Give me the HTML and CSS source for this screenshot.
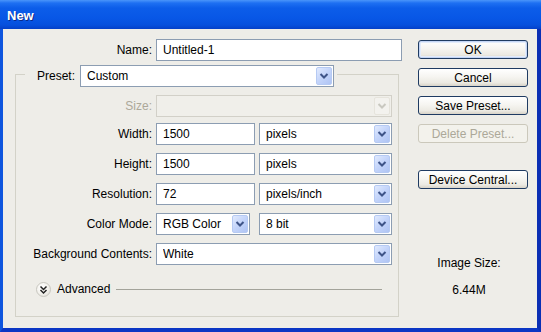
FILE: index.html
```html
<!DOCTYPE html>
<html>
<head>
<meta charset="utf-8">
<title>New</title>
<link rel="stylesheet" href="styles.css">
</head>
<body>
<div class="window">
  <div class="titlebar"><span class="title">New</span></div>
  <div class="frame">
    <div class="client">
      <div class="left">
        <div class="name-row">
          <span class="lbl name-lbl">Name:</span>
          <div class="field name-field">Untitled-1</div>
        </div>
        <div class="group">
          <div class="group-head">
            <span class="preset-lbl">Preset:</span>
            <div class="combo preset-combo"><span class="val">Custom</span><span class="arrow"><svg width="16" height="18" viewBox="0 0 16 18"><polyline points="4.5,7 8,10.5 11.5,7" fill="none" stroke="#3E5488" stroke-width="2"/></svg></span></div>
          </div>
          <div class="rows">
            <div class="row size-row">
              <span class="lbl disabled-text">Size:</span>
              <div class="combo combo-disabled full"><span class="val"></span><span class="arrow arrow-disabled"><svg width="16" height="18" viewBox="0 0 16 18"><polyline points="4.5,7 8,10.5 11.5,7" fill="none" stroke="#C9C8C0" stroke-width="2"/></svg></span></div>
            </div>
            <div class="row">
              <span class="lbl">Width:</span>
              <div class="ctrls">
                <div class="field num-field">1500</div>
                <div class="combo unit"><span class="val">pixels</span><span class="arrow"><svg width="16" height="18" viewBox="0 0 16 18"><polyline points="4.5,7 8,10.5 11.5,7" fill="none" stroke="#3E5488" stroke-width="2"/></svg></span></div>
              </div>
            </div>
            <div class="row">
              <span class="lbl">Height:</span>
              <div class="ctrls">
                <div class="field num-field">1500</div>
                <div class="combo unit"><span class="val">pixels</span><span class="arrow"><svg width="16" height="18" viewBox="0 0 16 18"><polyline points="4.5,7 8,10.5 11.5,7" fill="none" stroke="#3E5488" stroke-width="2"/></svg></span></div>
              </div>
            </div>
            <div class="row">
              <span class="lbl">Resolution:</span>
              <div class="ctrls">
                <div class="field num-field">72</div>
                <div class="combo unit"><span class="val">pixels/inch</span><span class="arrow"><svg width="16" height="18" viewBox="0 0 16 18"><polyline points="4.5,7 8,10.5 11.5,7" fill="none" stroke="#3E5488" stroke-width="2"/></svg></span></div>
              </div>
            </div>
            <div class="row">
              <span class="lbl">Color Mode:</span>
              <div class="ctrls">
                <div class="combo mode"><span class="val">RGB Color</span><span class="arrow"><svg width="16" height="18" viewBox="0 0 16 18"><polyline points="4.5,7 8,10.5 11.5,7" fill="none" stroke="#3E5488" stroke-width="2"/></svg></span></div>
                <div class="combo unit"><span class="val">8 bit</span><span class="arrow"><svg width="16" height="18" viewBox="0 0 16 18"><polyline points="4.5,7 8,10.5 11.5,7" fill="none" stroke="#3E5488" stroke-width="2"/></svg></span></div>
              </div>
            </div>
            <div class="row">
              <span class="lbl">Background Contents:</span>
              <div class="combo full"><span class="val">White</span><span class="arrow"><svg width="16" height="18" viewBox="0 0 16 18"><polyline points="4.5,7 8,10.5 11.5,7" fill="none" stroke="#3E5488" stroke-width="2"/></svg></span></div>
            </div>
          </div>
          <div class="advanced">
            <span class="adv-icon"><svg width="15" height="15" viewBox="0 0 15 15"><polyline points="4.5,4.5 7.5,7.5 10.5,4.5" fill="none" stroke="#222" stroke-width="1.5"/><polyline points="4.5,8 7.5,11 10.5,8" fill="none" stroke="#222" stroke-width="1.5"/></svg></span>
            <span class="adv-text">Advanced</span>
            <span class="adv-line"></span>
          </div>
        </div>
      </div>
      <div class="right">
        <div class="btn default">OK</div>
        <div class="btn">Cancel</div>
        <div class="btn">Save Preset...</div>
        <div class="btn disabled">Delete Preset...</div>
        <div class="btn device">Device Central...</div>
        <div class="info">
          <div class="info-line">Image Size:</div>
          <div class="info-line info-value">6.44M</div>
        </div>
      </div>
    </div>
  </div>
</div>
</body>
</html>
```

FILE: styles.css
```css
html, body {
  margin: 0;
  padding: 0;
}
body {
  width: 541px;
  height: 332px;
  overflow: hidden;
  font-family: "Liberation Sans", Arial, sans-serif;
  font-size: 12px;
  color: #000;
}
.window {
  width: 541px;
  height: 332px;
  display: flex;
  flex-direction: column;
}
.titlebar {
  height: 29px;
  flex: none;
  display: flex;
  align-items: center;
  padding-left: 7px;
  background: linear-gradient(#4A95FA 0px, #1E70F2 3px, #0C5DE9 8px, #0857E6 18px, #0650DD 25px, #0440C8 29px);
}
.title {
  color: #fff;
  font-weight: bold;
  font-size: 13px;
  text-shadow: 1px 1px 0 #0A2A8A;
  margin-top: 1px;
}
.frame {
  flex: 1;
  display: flex;
  border-left: 3px solid #0F55DE;
  border-right: 4px solid #0A2EB4;
  border-bottom: 4px solid #0B36C4;
}
.client {
  flex: 1;
  display: flex;
  background: #EEEDE8;
  padding-left: 12px;
}
.left {
  width: 387px;
  padding-top: 10px;
  display: flex;
  flex-direction: column;
}
.name-row {
  display: flex;
  align-items: center;
  height: 22px;
}
.name-lbl {
  width: 137px;
  text-align: right;
  margin-right: 4px;
}
.field {
  height: 22px;
  box-sizing: border-box;
  border: 1px solid #8C9DB2;
  background: #fff;
  padding-left: 6px;
  display: flex;
  align-items: center;
}
.name-field {
  width: 246px;
}
.group {
  margin-top: 13px;
  width: 384px;
  box-sizing: border-box;
  border: 1px solid #D3D2C8;
  padding: 0 6px 19px 0;
}
.group-head {
  display: flex;
  align-items: center;
  height: 22px;
  margin: -10px 0 0 9px;
  width: max-content;
  background: #EEEDE8;
  padding: 0 3px 0 12px;
}
.preset-lbl {
  width: 39px;
  margin-right: 4px;
  white-space: nowrap;
}
.combo {
  height: 22px;
  box-sizing: border-box;
  border: 1px solid #8C9DB2;
  background: #fff;
  display: flex;
  align-items: center;
  padding-left: 6px;
}
.combo .val {
  flex: 1;
  white-space: nowrap;
  overflow: hidden;
}
.arrow {
  flex: none;
  width: 16px;
  height: 18px;
  margin: 1px;
  box-sizing: border-box;
  border: 1px solid #B6CAF3;
  border-radius: 2px;
  background: linear-gradient(135deg, #E1EAFE 0%, #C3D4FA 50%, #AFC4F4 100%);
  display: flex;
  align-items: center;
  justify-content: center;
}
.arrow svg {
  display: block;
  margin: -1px;
}
.arrow-disabled {
  border-color: #E6E4DC;
  background: #F3F2EE;
}
.preset-combo {
  width: 254px;
}
.rows {
  margin-top: 8px;
  display: flex;
  flex-direction: column;
  gap: 8px;
}
.row {
  display: flex;
  align-items: center;
  height: 22px;
}
.row .lbl {
  width: 136px;
  text-align: right;
  margin-right: 4px;
  white-space: nowrap;
}
.size-row {
  margin-bottom: -2px;
}
.disabled-text {
  color: #ACA899;
}
.combo-disabled {
  background: #F0EFEA;
  border-color: #D2D0C8;
}
.full {
  width: 236px;
}
.ctrls {
  width: 236px;
  display: flex;
  justify-content: space-between;
}
.num-field {
  width: 99px;
}
.unit {
  width: 133px;
}
.mode {
  width: 94px;
}
.advanced {
  display: flex;
  align-items: center;
  height: 16px;
  margin: 16px 10px 0 20px;
}
.adv-icon {
  width: 15px;
  height: 15px;
  border-radius: 50%;
  box-sizing: border-box;
  border: 1px solid #C8C7C0;
  background: radial-gradient(circle at 40% 35%, #FFFFFF 0%, #F2F1EC 55%, #D9D7CF 100%);
  display: flex;
  align-items: center;
  justify-content: center;
}
.adv-icon svg {
  display: block;
  margin: -1px;
}
.adv-text {
  margin-left: 6px;
}
.adv-line {
  flex: 1;
  height: 1px;
  background: #A3A39A;
  margin-left: 6px;
}
.right {
  margin-left: 16px;
  width: 110px;
  padding-top: 11px;
  display: flex;
  flex-direction: column;
}
.btn {
  height: 19px;
  box-sizing: border-box;
  border: 1px solid #1F3B62;
  border-radius: 3px;
  background: linear-gradient(#FFFFFF 0%, #F6F5F1 45%, #ECEAE3 80%, #D8D3C8 100%);
  display: flex;
  align-items: center;
  justify-content: center;
  margin-bottom: 9px;
  white-space: nowrap;
}
.btn.default {
  box-shadow: inset 0 0 0 1px #C3D5F5, inset 0 0 0 2px #E3ECFB;
}
.btn.disabled {
  border-color: #CBC8BB;
  color: #ACA899;
  background: #F3F2EC;
}
.btn.device {
  margin-top: 18px;
  margin-bottom: 0;
}
.info {
  margin-top: 67px;
  padding-right: 8px;
  text-align: center;
}
.info-line {
  line-height: 14px;
}
.info-value {
  margin-top: 13px;
}
```
